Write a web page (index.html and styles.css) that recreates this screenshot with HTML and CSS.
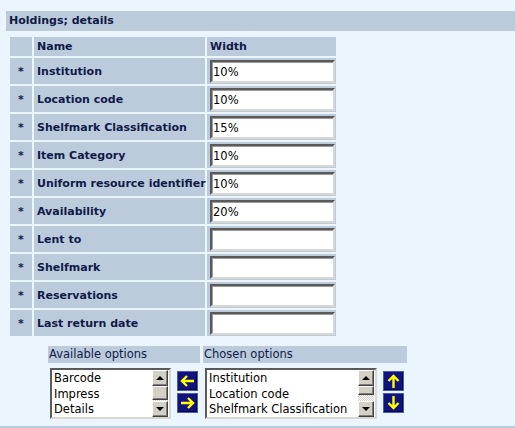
FILE: index.html
```html
<!DOCTYPE html>
<html>
<head>
<meta charset="utf-8">
<link rel="stylesheet" href="styles.css">
</head>
<body>
<div class="section-head">Holdings; details</div>
<div class="fields">
  <div class="cell hd"></div><div class="cell hd name">Name</div><div class="cell hd">Width</div>
  <div class="cell star">*</div><div class="cell name">Institution</div><div class="cell w"><input class="txt" value="10%"></div>
  <div class="cell star">*</div><div class="cell name">Location code</div><div class="cell w"><input class="txt" value="10%"></div>
  <div class="cell star">*</div><div class="cell name">Shelfmark Classification</div><div class="cell w"><input class="txt" value="15%"></div>
  <div class="cell star">*</div><div class="cell name">Item Category</div><div class="cell w"><input class="txt" value="10%"></div>
  <div class="cell star">*</div><div class="cell name">Uniform resource identifier</div><div class="cell w"><input class="txt" value="10%"></div>
  <div class="cell star">*</div><div class="cell name">Availability</div><div class="cell w"><input class="txt" value="20%"></div>
  <div class="cell star">*</div><div class="cell name">Lent to</div><div class="cell w"><input class="txt" value=""></div>
  <div class="cell star">*</div><div class="cell name">Shelfmark</div><div class="cell w"><input class="txt" value=""></div>
  <div class="cell star">*</div><div class="cell name">Reservations</div><div class="cell w"><input class="txt" value=""></div>
  <div class="cell star">*</div><div class="cell name">Last return date</div><div class="cell w"><input class="txt" value=""></div>
</div>

<div class="picker">
  <div class="pk-head avail">Available options</div>
  <div class="pk-head chosen">Chosen options</div>
  <div class="pk-body avail">
    <div class="listbox lb-avail">
      <div class="items"><div>Barcode</div><div>Impress</div><div>Details</div></div>
      <div class="sbar">
        <div class="sbtn"><span class="tri up"></span></div>
        <div class="thumb"></div>
        <div class="track"></div>
        <div class="sbtn"><span class="tri down"></span></div>
      </div>
    </div>
    <div class="btns">
      <div class="abtn"><svg width="17" height="16" viewBox="0 0 17 16"><path d="M15 8H3M8 3L3 8L8 13" fill="none" stroke="#ffff00" stroke-width="2.4"/></svg></div>
      <div class="abtn"><svg width="17" height="16" viewBox="0 0 17 16"><path d="M2 8H14M9 3L14 8L9 13" fill="none" stroke="#ffff00" stroke-width="2.4"/></svg></div>
    </div>
  </div>
  <div class="pk-body chosen">
    <div class="listbox lb-chosen">
      <div class="items"><div>Institution</div><div>Location code</div><div>Shelfmark Classification</div></div>
      <div class="sbar">
        <div class="sbtn"><span class="tri up"></span></div>
        <div class="thumb short"></div>
        <div class="track"></div>
        <div class="sbtn"><span class="tri down"></span></div>
      </div>
    </div>
    <div class="btns">
      <div class="abtn"><svg width="17" height="16" viewBox="0 0 17 16"><path d="M8.5 15V3M3.5 8L8.5 3L13.5 8" fill="none" stroke="#ffff00" stroke-width="2.4"/></svg></div>
      <div class="abtn"><svg width="17" height="16" viewBox="0 0 17 16"><path d="M8.5 1V13M3.5 8L8.5 13L13.5 8" fill="none" stroke="#ffff00" stroke-width="2.4"/></svg></div>
    </div>
  </div>
</div>
<div class="next-bar"></div>
</body>
</html>
```

FILE: styles.css
```css
html, body {
  margin: 0;
  padding: 0;
  background: #eaf5fd;
  font-family: "DejaVu Sans", Verdana, sans-serif;
  color: #101a48;
  overflow: hidden;
}
body {
  width: 515px;
  height: 428px;
  position: relative;
}
.section-head {
  margin: 11px 0 0 6px;
  height: 20px;
  line-height: 20px;
  padding-left: 3px;
  background: #bccbdb;
  font-weight: bold;
  font-size: 11px;
}
.fields {
  margin: 6px 0 0 10px;
  display: grid;
  grid-template-columns: 22px 171px 129px;
  grid-template-rows: 19px repeat(10, 26px);
  gap: 2px;
  width: 326px;
}
.cell {
  background: #bccbdb;
  font-size: 11px;
  font-weight: bold;
  display: flex;
  align-items: center;
}
.cell.hd { padding-left: 3px; }
.cell.name { padding-left: 3px; white-space: nowrap; }
.cell.star { justify-content: center; font-weight: bold; }
.cell.w { padding-left: 3px; }
.txt {
  box-sizing: border-box;
  width: 125px;
  height: 23px;
  margin: 0;
  padding: 1px 2px 0 1px;
  font-family: "DejaVu Sans", Verdana, sans-serif;
  font-size: 11.5px;
  color: #000;
  background: #fff;
  border-style: solid;
  border-width: 2px;
  border-color: #5a5a5a #d8d8d0 #d8d8d0 #5a5a5a;
  box-shadow: inset 1px 1px 0 #9c9c9c;
  outline: none;
}
.picker {
  margin: 10px 0 0 48px;
  display: grid;
  grid-template-columns: 152px 204px;
  column-gap: 3px;
  row-gap: 5px;
  width: 359px;
}
.pk-head {
  background: #bccbdb;
  height: 17px;
  line-height: 17px;
  font-size: 11.5px;
  padding-left: 1px;
}
.pk-body {
  display: flex;
  align-items: flex-start;
  padding-left: 2px;
}
.listbox {
  box-sizing: border-box;
  height: 51px;
  background: #fff;
  border-style: solid;
  border-width: 2px;
  border-color: #5a5a5a #d8d8d0 #d8d8d0 #5a5a5a;
  display: flex;
}
.lb-avail { width: 121px; }
.lb-chosen { width: 172px; }
.items {
  flex: 1;
  font-size: 11.5px;
  line-height: 15.5px;
  color: #000;
  padding: 1px 0 0 2px;
  white-space: nowrap;
  overflow: hidden;
}
.sbar {
  width: 16px;
  display: flex;
  flex-direction: column;
  margin: 0 1px 0 0;
}
.sbtn, .thumb {
  box-sizing: border-box;
  background: #d4d0c8;
  border-style: solid;
  border-width: 1px;
  border-color: #fff #404040 #404040 #fff;
  box-shadow: inset -1px -1px 0 #808080;
}
.sbtn {
  height: 16px;
  display: flex;
  align-items: center;
  justify-content: center;
}
.thumb { height: 14px; }
.thumb.short { height: 9px; }
.track {
  flex: 1;
  background-color: #e8e6e2;
  background-image: repeating-conic-gradient(#d4d0c8 0 25%, #ffffff 0 50%);
  background-size: 2px 2px;
}
.tri {
  width: 0;
  height: 0;
  border-left: 4px solid transparent;
  border-right: 4px solid transparent;
}
.tri.up { border-bottom: 4px solid #000; }
.tri.down { border-top: 4px solid #000; }
.btns {
  display: flex;
  flex-direction: column;
  gap: 2px;
  margin: 3px 0 0 6px;
}
.abtn {
  box-sizing: border-box;
  width: 21px;
  height: 20px;
  background: #10127e;
  border: 1px solid #4a5ab8;
  box-shadow: inset -1px -1px 0 #080840;
  display: flex;
  align-items: center;
  justify-content: center;
}
.next-bar {
  margin: 7px 0 0 0;
  height: 6px;
  background: #bccbdb;
}
```
